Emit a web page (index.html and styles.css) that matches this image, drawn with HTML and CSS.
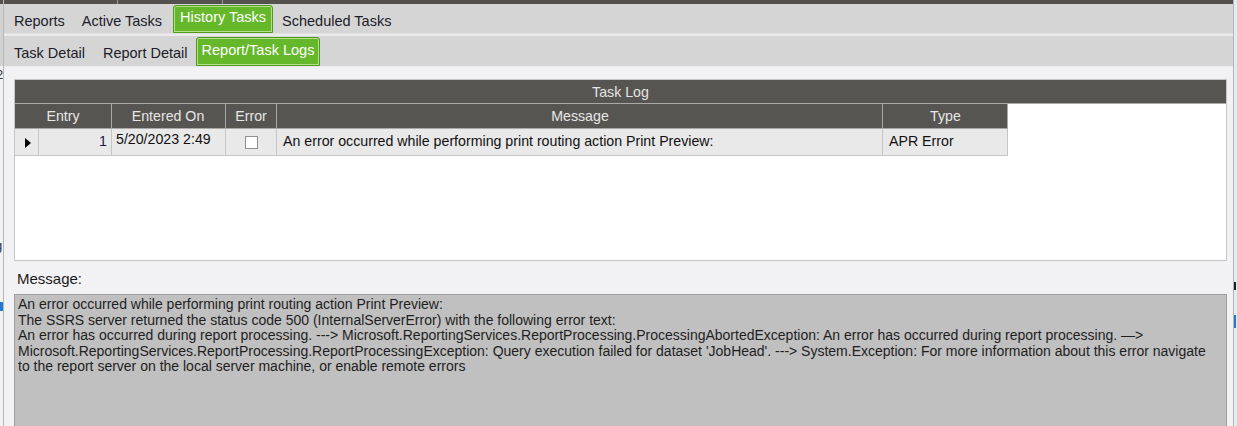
FILE: index.html
```html
<!DOCTYPE html>
<html>
<head>
<meta charset="utf-8">
<link rel="stylesheet" href="styles.css">
</head>
<body>
<div class="screen">
  <div class="edge-left">
    <div class="edge-l-top"></div>
    <div class="edge-l-body"><span class="edge-char c2">2</span><span class="edge-blue"></span><span class="edge-char cg">g</span><span class="edge-char cr">r</span></div>
  </div>
  <div class="window">
    <div class="topbar"><span class="tb-div d1"></span><span class="tb-div d2"></span></div>
    <div class="tabs tabs-main">
      <span class="tab t-reports">Reports</span>
      <span class="tab t-active">Active Tasks</span>
      <span class="tab tab-on t-history">History Tasks</span>
      <span class="tab t-sched">Scheduled Tasks</span>
    </div>
    <div class="tab-sep"></div>
    <div class="tabs tabs-sub">
      <span class="tab t-detail">Task Detail</span>
      <span class="tab t-rdetail">Report Detail</span>
      <span class="tab tab-on t-logs">Report/Task Logs</span>
    </div>
    <div class="content">
      <div class="grid">
        <div class="grid-title">Task Log</div>
        <div class="grid-row grid-head">
          <div class="cell c-entry-h">Entry</div>
          <div class="cell c-date">Entered On</div>
          <div class="cell c-err">Error</div>
          <div class="cell c-msg">Message</div>
          <div class="cell c-type">Type</div>
        </div>
        <div class="grid-row grid-data">
          <div class="cell c-ind"><span class="arrow"></span></div>
          <div class="cell c-entry">1</div>
          <div class="cell c-date">5/20/2023 2:49</div>
          <div class="cell c-err"><span class="check"></span></div>
          <div class="cell c-msg">An error occurred while performing print routing action Print Preview:</div>
          <div class="cell c-type">APR Error</div>
        </div>
      </div>
      <div class="msg-label">Message:</div>
      <div class="msg-box">An error occurred while performing print routing action Print Preview:<br>The SSRS server returned the status code 500 (InternalServerError) with the following error text:<br>An error has occurred during report processing. ---&gt; Microsoft.ReportingServices.ReportProcessing.ProcessingAbortedException: An error has occurred during report processing. —&gt;<br>Microsoft.ReportingServices.ReportProcessing.ReportProcessingException: Query execution failed for dataset 'JobHead'. ---&gt; System.Exception: For more information about this error navigate<br>to the report server on the local server machine, or enable remote errors</div>
    </div>
  </div>
  <div class="edge-right">
    <span class="er-dark"></span><span class="er-blue"></span>
  </div>
</div>
</body>
</html>
```

FILE: styles.css
```css
* { box-sizing: border-box; }
html, body { margin: 0; padding: 0; }
body {
  width: 1237px;
  height: 426px;
  overflow: hidden;
  background: #f2f2f4;
  font-family: "Liberation Sans", Arial, sans-serif;
  color: #1a1a1a;
}
.screen {
  display: flex;
  width: 1237px;
  height: 426px;
}
.edge-left {
  width: 4px;
  flex: none;
  display: flex;
  flex-direction: column;
  border-right: 1px solid #b8b8b8;
  background: #e8e8e8;
  overflow: hidden;
}
.edge-l-top {
  height: 66px;
  background: #d2d2d2;
  border-top: 4px solid #53514e;
}
.edge-l-body {
  position: relative;
  flex: 1;
  background: #f2f2f2;
}
.edge-char {
  position: absolute;
  font-size: 13px;
  color: #333;
}
.c2 { top: 1px; left: -4px; }
.cg { top: 172px; left: -5px; }
.cr { top: 329px; left: -5px; }
.edge-blue {
  position: absolute;
  top: 236px;
  left: 0;
  width: 4px;
  height: 9px;
  background: #1f7ad0;
}
.window {
  width: 1230px;
  flex: none;
  display: flex;
  flex-direction: column;
  border-right: 1px solid #b4b4b4;
}
.edge-right {
  position: relative;
  flex: 1;
  background: #e9eaec;
}
.er-dark {
  position: absolute;
  top: 282px;
  left: 0;
  width: 2px;
  height: 8px;
  background: #1d1d3a;
}
.er-blue {
  position: absolute;
  top: 315px;
  left: 0;
  width: 2px;
  height: 13px;
  background: #1f7ad0;
}
.topbar {
  position: relative;
  height: 4px;
  background: #53514e;
  flex: none;
}
.tb-div {
  position: absolute;
  top: 0;
  width: 1px;
  height: 4px;
  background: #9a9895;
}
.d1 { left: 113px; }
.d2 { left: 218px; }
.tabs {
  display: flex;
  align-items: stretch;
  background: #d5d5d5;
  padding-left: 4px;
  flex: none;
  font-size: 14.5px;
}
.tabs-main { height: 29px; padding-top: 1px; }
.tabs-sub { height: 30px; padding-top: 1px; }
.tab-sep {
  height: 3px;
  background: #ebebeb;
  border-top: 1px solid #e0e0e0;
  flex: none;
}
.tab {
  display: flex;
  align-items: center;
  padding: 3px 6px 0;
  color: #1c1c2a;
  white-space: nowrap;
}
.tab-on {
  background: #66b82b;
  color: #ffffff;
  border: 1px solid #4f9a1c;
  box-shadow: inset 0 0 0 1px #b4e08c;
  border-radius: 3px 3px 0 0;
  padding: 0 5px 4px;
}
.t-reports { margin-right: 5px; }
.t-active { margin-right: 5px; }
.t-history { margin-right: 3px; padding: 0 6px 4px 6px; }
.t-detail { margin-right: 6px; }
.t-rdetail { margin-right: 2px; }
.content {
  flex: 1;
  background: #f2f2f4;
  border-top: 1px solid #e9e9e9;
  padding: 12px 6px 0 10px;
  display: flex;
  flex-direction: column;
  overflow: hidden;
}
.grid {
  height: 182px;
  background: #ffffff;
  border: 1px solid #c6c6c6;
  flex: none;
}
.grid-title {
  height: 24px;
  background: #575551;
  color: #e4e4e4;
  font-size: 14.2px;
  display: flex;
  align-items: center;
  justify-content: center;
  border-bottom: 1px solid #a9a9a7;
}
.grid-row {
  display: flex;
}
.grid-head {
  height: 25px;
}
.grid-head .cell {
  background: #575551;
  color: #e6e6e6;
  justify-content: center;
  border-right: 1px solid #a9a9a7;
  border-bottom: 1px solid #a9a9a7;
  font-size: 14.2px;
}
.grid-data {
  height: 27px;
}
.grid-data .cell {
  background: #e9e9e9;
  border-right: 1px solid #c6c6c6;
  border-bottom: 1px solid #c6c6c6;
  font-size: 14.2px;
  color: #111;
  align-items: flex-start;
  padding-top: 4px;
}
.cell {
  display: flex;
  align-items: center;
  flex: none;
  padding: 0 5px;
  white-space: nowrap;
  overflow: hidden;
}
.c-entry-h { width: 97px; }
.grid-data .c-ind { width: 24px; justify-content: center; padding: 0; align-items: center; }
.grid-data .c-entry { width: 73px; justify-content: flex-end; padding-right: 4px; color: #2a1540; }
.c-date { width: 114px; padding-left: 4px; }
.grid-data .c-date { padding-top: 2px; }
.c-err { width: 51px; justify-content: center; }
.grid-data .c-err { align-items: center; padding-top: 0; }
.c-msg { width: 606px; padding-left: 6px; }
.c-type { width: 125px; padding-left: 6px; }
.arrow {
  width: 0;
  height: 0;
  border-top: 5px solid transparent;
  border-bottom: 5px solid transparent;
  border-left: 6px solid #000;
  margin-left: 2px;
  margin-top: 2px;
}
.check {
  width: 13px;
  height: 13px;
  background: #fff;
  border: 1px solid #8f8f8f;
  margin-top: 1px;
}
.msg-label {
  font-size: 15px;
  color: #1a1a1a;
  padding: 9px 0 0 3px;
  height: 33px;
  flex: none;
}
.msg-box {
  flex: 1;
  background: #c0c0c0;
  border: 1px solid #9e9e9e;
  border-bottom: none;
  padding: 2px 3px;
  font-size: 14px;
  line-height: 15.5px;
  color: #1e1e1e;
  white-space: nowrap;
}
```
